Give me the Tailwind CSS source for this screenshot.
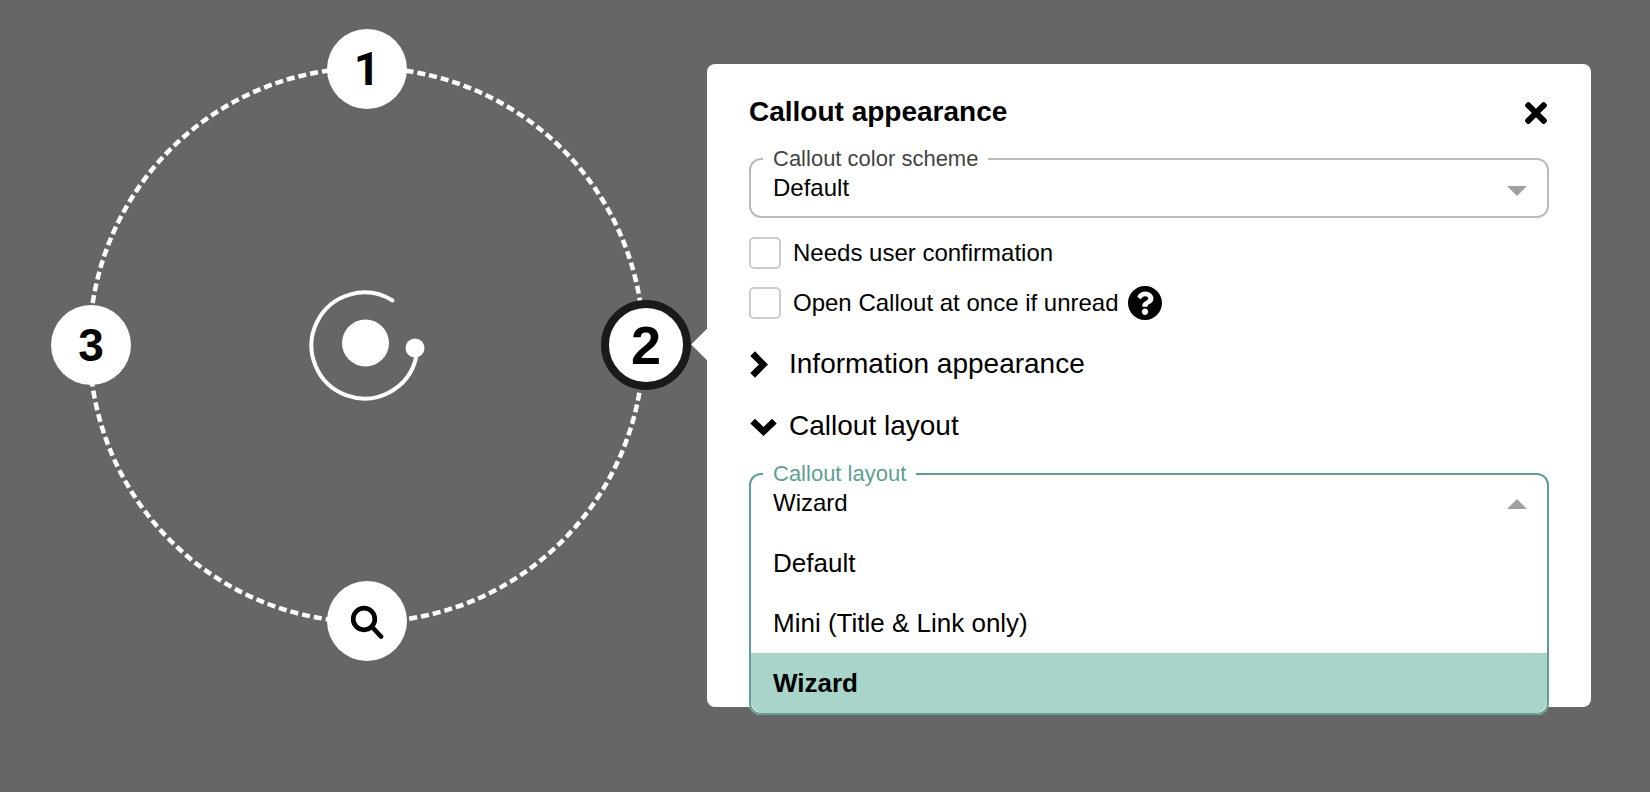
<!doctype html>
<html lang="en">
<head>
<meta charset="utf-8">
<title>Callout appearance</title>
<script src="https://cdn.jsdelivr.net/npm/@tailwindcss/browser@4"></script>
</head>
<body class="m-0">
<div class="flex items-start w-[1650px] h-[792px] overflow-hidden bg-[#666666] font-['Liberation_Sans',Arial,sans-serif] text-black">
  <!-- Diagram -->
  <div class="relative w-[707px] h-[792px] shrink-0">
    <svg class="absolute left-0 top-0" width="707" height="792" viewBox="0 0 707 792" fill="none">
      <circle cx="366.500" cy="345" r="277" stroke="#fff" stroke-width="4.500" stroke-dasharray="8 4"/>
      <path d="M392.500 300.500A53 53 0 1 0 416 358" stroke="#fff" stroke-width="4" stroke-linecap="round"/>
      <circle cx="365.500" cy="343" r="23.500" fill="#fff"/>
      <circle cx="415" cy="348" r="9.500" fill="#fff"/>
    </svg>
    <div class="absolute left-[327px] top-[29px] w-[80px] h-[80px] rounded-full bg-white flex items-center justify-center font-['Roboto',sans-serif] text-[46px] font-bold leading-none">1</div>
    <div class="absolute left-[51px] top-[305px] w-[80px] h-[80px] rounded-full bg-white flex items-center justify-center text-[46px] font-bold leading-none">3</div>
    <div class="absolute left-[601px] top-[300px] w-[90px] h-[90px] rounded-full bg-white border-8 border-[#1a1a1a] flex items-center justify-center text-[54px] font-bold leading-none">2</div>
    <div class="absolute left-[327px] top-[581px] w-[80px] h-[80px] rounded-full bg-white flex items-center justify-center">
      <svg width="36" height="36" viewBox="0 0 36 36" fill="none" stroke="#000" stroke-width="4.700" stroke-linecap="round">
        <circle cx="15" cy="16" r="10.800"/>
        <path d="M24 25l8 8.500"/>
      </svg>
    </div>
  </div>
  <!-- Panel -->
  <div class="relative mt-[64px] w-[884px] h-[643px] shrink-0 rounded-lg bg-white px-[42px] pt-[32px]">
    <div class="absolute -left-[11.500px] top-[268.500px] w-[23px] h-[23px] rotate-45 bg-white"></div>
    <div class="relative flex items-center justify-between h-[32px]">
      <h2 class="text-[28px] font-bold leading-none">Callout appearance</h2>
      <svg class="mr-[2px] mt-[1px]" width="22" height="32" viewBox="0 0 352 512" fill="#000"><path d="M242.72 256l100.07-100.07c12.28-12.28 12.28-32.19 0-44.48l-22.24-22.24c-12.28-12.28-32.19-12.28-44.48 0L176 189.28 75.93 89.21c-12.28-12.28-32.19-12.28-44.48 0L9.21 111.45c-12.28 12.28-12.28 32.19 0 44.48L109.28 256 9.21 356.07c-12.28 12.28-12.28 32.19 0 44.48l22.24 22.24c12.28 12.28 32.2 12.28 44.48 0L176 322.720l100.07 100.07c12.28 12.28 32.2 12.28 44.48 0l22.24-22.24c12.28-12.28 12.28-32.19 0-44.48L242.72 256z"/></svg>
    </div>
    <fieldset class="relative mt-[18px] h-[72px] rounded-xl border-2 border-[#bbbbbb]">
      <legend class="ml-[12px] px-[10px] text-[22px] leading-[25px] text-[#444444]">Callout color scheme</legend>
      <div class="flex items-center justify-between h-[33px] pl-[22px] pr-[20px] text-[24px] leading-none">
        <span>Default</span>
        <span class="mt-[6px] w-0 h-0 border-x-[10px] border-x-transparent border-t-[10px] border-t-[#a0a0a0]"></span>
      </div>
    </fieldset>
    <label class="flex items-center gap-[12px] mt-[19px] h-[32px] text-[24px]">
      <input type="checkbox" class="appearance-none w-[32px] h-[32px] rounded-[5px] border-2 border-[#cccccc] bg-white">
      <span>Needs user confirmation</span>
    </label>
    <label class="flex items-center gap-[12px] mt-[18px] h-[32px] text-[24px]">
      <input type="checkbox" class="appearance-none w-[32px] h-[32px] rounded-[5px] border-2 border-[#cccccc] bg-white">
      <span>Open Callout at once if unread</span>
      <svg class="-ml-[3px]" width="34" height="34" viewBox="8 8 496 496" fill="#000"><path d="M504 256c0 136.997-111.043 248-248 248S8 392.997 8 256C8 119.083 119.043 8 256 8s248 111.083 248 248zM262.655 90c-54.497 0-89.255 22.957-116.549 63.758-3.536 5.286-2.353 12.415 2.715 16.258l34.699 26.31c5.205 3.947 12.621 3.008 16.665-2.122 17.864-22.658 30.113-35.797 57.303-35.797 20.429 0 45.698 13.148 45.698 32.958 0 14.976-12.363 22.667-32.534 33.976C247.128 238.528 216 254.941 216 296v4c0 6.627 5.373 12 12 12h56c6.627 0 12-5.373 12-12v-1.333c0-28.462 83.186-29.647 83.186-106.667 0-58.002-60.165-102-116.531-102zM256 338c-25.365 0-46 20.635-46 46 0 25.364 20.635 46 46 46s46-20.636 46-46c0-25.365-20.635-46-46-46z"/></svg>
    </label>
    <div class="flex items-center mt-[28px] h-[34px] text-[28px]">
      <span class="flex shrink-0 w-[40px] pl-[1px]">
        <svg width="18" height="27" viewBox="0 0 18 27" fill="#000"><path d="M5 .3L18 13.500 5 26.700 .3 22 8.900 13.500 .3 5z"/></svg>
      </span>
      <span>Information appearance</span>
    </div>
    <div class="flex items-center mt-[28px] h-[34px] text-[28px]">
      <span class="flex shrink-0 w-[40px] pl-[1px] pt-[2px]">
        <svg width="27" height="18" viewBox="0 0 27 18" fill="#000"><path d="M.3 5.500L5 .8 13.500 9 22 .8 26.700 5.500 13.500 18z"/></svg>
      </span>
      <span>Callout layout</span>
    </div>
    <fieldset class="relative mt-[18px] rounded-xl border-2 border-[#5f9f93] bg-white overflow-hidden">
      <legend class="ml-[12px] px-[10px] text-[22px] leading-[25px] text-[#5f9f93]">Callout layout</legend>
      <div class="flex items-center justify-between h-[34px] pl-[22px] pr-[20px] text-[24px] leading-none">
        <span>Wizard</span>
        <span class="mt-[2px] w-0 h-0 border-x-[10px] border-x-transparent border-b-[10px] border-b-[#a0a0a0]"></span>
      </div>
      <div class="mt-[13px] text-[26px]">
        <div class="flex items-center h-[60px] pl-[22px]">Default</div>
        <div class="flex items-center h-[60px] pl-[22px]">Mini (Title &amp; Link only)</div>
        <div class="flex items-center h-[60px] pl-[22px] bg-[#a9d4ca] font-bold">Wizard</div>
      </div>
    </fieldset>
  </div>
</div>
</body>
</html>
